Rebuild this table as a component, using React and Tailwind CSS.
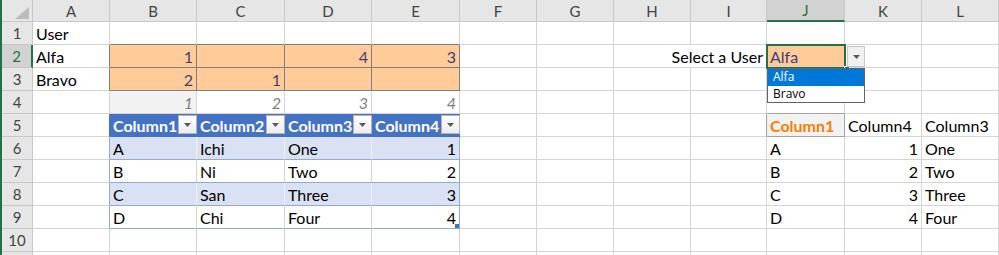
import React from 'react';

// Sheet view: row/column headers, a small input block, a blue-styled table
// and a lookup result on the right with a data-validation dropdown open.

const COLS = ['A', 'B', 'C', 'D', 'E', 'F', 'G', 'H', 'I', 'J', 'K', 'L'];

// border colour helpers (right / bottom edge of each cell)
const GR = 'border-r-[#d4d4d4]';
const GB = 'border-b-[#d4d4d4]';
const IN_R = 'border-r-[#7f7f7f]';
const IN_B = 'border-b-[#7f7f7f]';
const INPUT = 'bg-[#ffcc99] text-[#3f3f76]';
const HEAD = 'bg-[#4472c4] font-bold text-white';
const HEAD_R = 'border-r-[#4472c4]';
const HEAD_B = 'border-b-[#4472c4]';
const TR = 'border-r-[#8ea9db]';
const TB = 'border-b-[#8ea9db]';
const BAND = 'bg-[#d9e1f2]';
const BAND_R = 'border-r-[#eef1f9]';
const CALC_R = 'border-r-[#a5a5a5]';
const CALC_B = 'border-b-[#a5a5a5]';

const sheet = Array.from({ length: 10 }, () => Array.from({ length: 12 }, () => ({})));
const set = (row, col, spec) => Object.assign(sheet[row - 1][col], spec);

// row 1
set(1, 0, { t: 'User' });
[1, 2, 3, 4].forEach((c) => set(1, c, { bb: IN_B }));

// rows 2-3: input block
set(2, 0, { t: 'Alfa', br: IN_R });
set(3, 0, { t: 'Bravo', br: IN_R });
[['1', '', '4', '3'], ['2', '1', '', '']].forEach((vals, i) =>
  vals.forEach((v, j) => set(2 + i, 1 + j, { t: v, al: 'r', cls: INPUT, br: IN_R, bb: IN_B }))
);
set(2, 7, { br: 'border-r-transparent' });
set(2, 8, { t: 'Select a User', al: 'r' });
set(2, 9, { t: 'Alfa', cls: `${INPUT} z-10`, dropdown: true });

// row 4: column positions
['1', '2', '3', '4'].forEach((v, j) =>
  set(4, 1 + j, { t: v, al: 'r', cls: j === 0 ? 'bg-[#f2f2f2] italic text-[#7f7f7f]' : 'italic text-[#7f7f7f]' })
);
set(4, 9, { bb: CALC_B });

// row 5: table header + lookup header
set(5, 0, { br: HEAD_R });
['Column1', 'Column2', 'Column3', 'Column4'].forEach((v, j) =>
  set(5, 1 + j, { t: v, cls: HEAD, br: HEAD_R, bb: HEAD_B, filter: true })
);
set(5, 8, { br: CALC_R });
set(5, 9, { t: 'Column1', cls: 'bg-[#f2f2f2] font-bold text-[#fa7d00]', br: CALC_R, bb: CALC_B });
set(5, 10, { t: 'Column4' });
set(5, 11, { t: 'Column3' });

// rows 6-9: table body + lookup result
const rows = [
  ['A', 'Ichi', 'One', '1'],
  ['B', 'Ni', 'Two', '2'],
  ['C', 'San', 'Three', '3'],
  ['D', 'Chi', 'Four', '4'],
];
rows.forEach(([k, jp, en, n], i) => {
  const r = 6 + i;
  const band = i % 2 === 0;
  set(r, 0, { br: TR });
  [k, jp, en].forEach((v, j) =>
    set(r, 1 + j, { t: v, cls: band ? BAND : '', br: band ? BAND_R : GR, bb: TB })
  );
  set(r, 4, { t: n, al: 'r', cls: band ? BAND : '', br: TR, bb: TB, handle: r === 9 });
  set(r, 9, { t: k });
  set(r, 10, { t: n, al: 'r' });
  set(r, 11, { t: en });
});

const Arrow = () => (
  <svg width="7" height="4" viewBox="0 0 7 4">
    <path d="M0 0h7L3.5 4z" fill="#595959" />
  </svg>
);

const FilterButton = () => (
  <span className="absolute -right-px top-px z-10 flex h-[19px] w-[19px] items-center justify-center border border-[#b4b4b4] bg-linear-to-b from-white to-[#ececec]">
    <Arrow />
  </span>
);

const Dropdown = () => (
  <>
    <span className="pointer-events-none absolute -left-px -top-px h-[25px] w-[80px] border-2 border-[#217346]" />
    <span className="absolute left-[77px] top-[21px] h-[6px] w-[6px] border border-white bg-[#217346]" />
    <span className="absolute left-[80px] top-[1px] flex h-[21px] w-[18px] items-center justify-center border border-[#c6c6c6] bg-[#f0f0f0]">
      <Arrow />
    </span>
    <div className="absolute left-0 top-[23px] w-[98px] border border-[#646464] bg-white font-['Open_Sans',sans-serif] text-[12px] leading-[16px] text-black">
      <div className="h-[17px] bg-[#0078d7] px-[5px] text-white">Alfa</div>
      <div className="h-[16px] px-[5px]">Bravo</div>
    </div>
  </>
);

const Cell = ({ t, al, cls = '', br = GR, bb = GB, filter, dropdown, handle }) => (
  <div
    className={`relative flex h-[23px] items-end whitespace-nowrap border-r border-b px-[3px] ${
      al === 'r' ? 'justify-end' : ''
    } ${br} ${bb} ${cls}`}
  >
    <span className="leading-[20px]">{t}</span>
    {filter && <FilterButton />}
    {dropdown && <Dropdown />}
    {handle && <span className="absolute bottom-0 right-0 h-[4px] w-[4px] bg-[#4472c4]" />}
  </div>
);

export default function App() {
  return (
    <div className="h-[255px] w-[999px] overflow-hidden border-l-2 border-[#217346] bg-white font-[Lato,sans-serif] text-[16px] text-black">
      <div className="grid grid-cols-[31px_77px_87px_88px_87px_88px_77px_77px_77px_76px_78px_77px_77px]">
        {/* corner */}
        <div className="h-[22px] border-r border-b border-[#c8c8c8] bg-[#e6e6e6]">
          <svg width="30" height="21" viewBox="0 0 30 21">
            <polygon points="27,7 27,19 13,19" fill="#bcbcbc" />
          </svg>
        </div>
        {COLS.map((c) =>
          c === 'J' ? (
            <div
              key={c}
              className="flex h-[22px] items-center justify-center border-r border-b-2 border-r-[#c8c8c8] border-b-[#217346] bg-[#d2d2d2] pt-[1px] text-[15px] text-[#217346]"
            >
              {c}
            </div>
          ) : (
            <div
              key={c}
              className="flex h-[22px] items-center justify-center border-r border-b border-[#c8c8c8] bg-[#e6e6e6] pt-[1px] text-[15px] text-[#444]"
            >
              {c}
            </div>
          )
        )}

        {sheet.map((cells, i) => (
          <React.Fragment key={i}>
            {i === 1 ? (
              <div className="flex h-[23px] items-center justify-center border-r-2 border-b border-r-[#217346] border-b-[#c8c8c8] bg-[#d2d2d2] text-[15px] text-[#217346]">
                {i + 1}
              </div>
            ) : (
              <div className="flex h-[23px] items-center justify-center border-r border-b border-[#c8c8c8] bg-[#e6e6e6] text-[15px] text-[#444]">
                {i + 1}
              </div>
            )}
            {cells.map((spec, j) => (
              <Cell key={j} {...spec} />
            ))}
          </React.Fragment>
        ))}

        {/* top sliver of the next row */}
        <div className="h-[23px] border-r border-[#c8c8c8] bg-[#e6e6e6]" />
        {COLS.map((c) => (
          <div key={c} className="h-[23px] border-r border-r-[#d4d4d4]" />
        ))}
      </div>
    </div>
  );
}
